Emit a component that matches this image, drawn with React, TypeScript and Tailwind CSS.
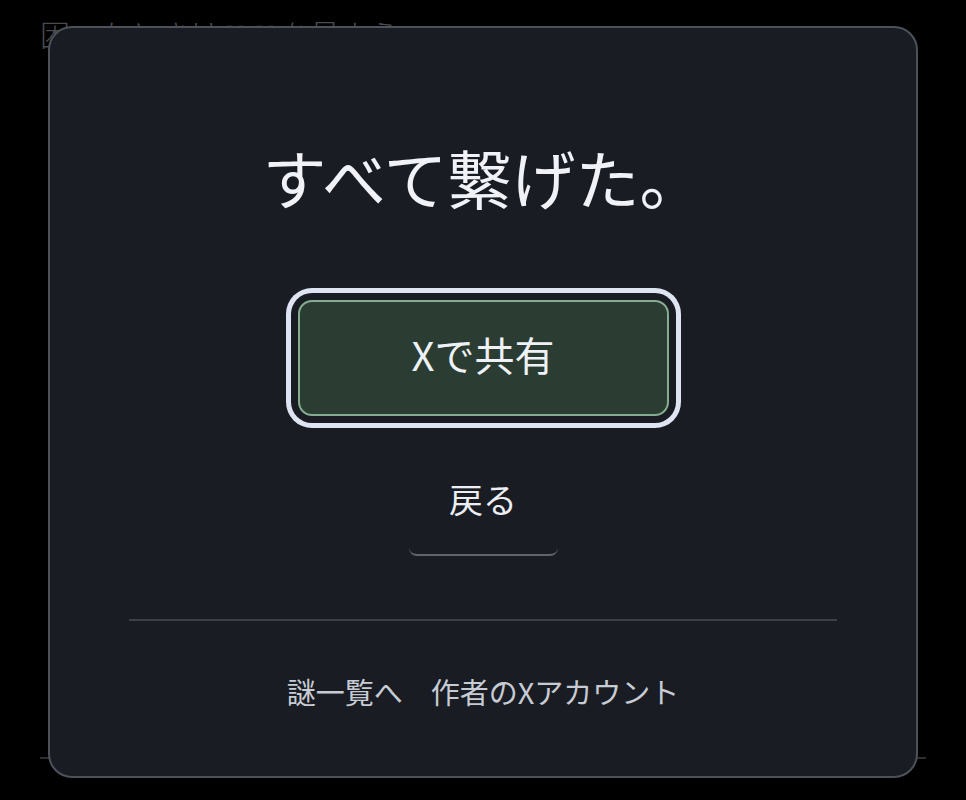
import React from "react";

const font = { fontFamily: '"Noto Sans CJK JP", "Noto Sans", sans-serif' };

export default function App() {
  return (
    <div className="relative h-[800px] w-[966px] overflow-hidden bg-black" style={font}>
      {/* page behind the dialog */}
      <div className="flex h-full flex-col px-[40px] pt-[14px]">
        <p className="text-[30px] font-light leading-[38px] text-[#4a4c50]">困ったときはここを見よう</p>
        <div className="mt-auto mb-[41px] h-[2px] w-[886px] bg-[#2c2e32]" />
      </div>

      {/* result dialog */}
      <div className="absolute left-[48px] top-[26px] flex h-[752px] w-[870px] flex-col items-center rounded-[24px] border-2 border-[#4d525a] bg-[#191c23]">
        <h2 className="mt-[116px] text-[64px] font-normal leading-[64px] text-[#f0f2f8]">
          すべて繋げた。
        </h2>

        <button className="mt-[92px] flex h-[116px] w-[371px] items-center justify-center rounded-[14px] border-2 border-[#86ad91] bg-[#2b3d33] pb-[8px] text-[40px] leading-none text-[#eef1f6] ring-[5px] ring-[#dfe4f2] ring-offset-[7px] ring-offset-[#191c23]">
          Xで共有
        </button>

        <button className="mt-[36px] flex h-[104px] w-[149px] items-center justify-center rounded-[8px] border-b-2 border-[#5f646c] pb-[8px] text-[34px] leading-none text-[#eceef3]">
          戻る
        </button>

        <div className="mt-[63px] h-[2px] w-[708px] bg-[#3c4149]" />

        <nav className="mt-[56px] flex items-center gap-[28px] text-[29px] leading-[28px] text-[#c7cbd3]">
          <a>謎一覧へ</a>
          <a>作者のXアカウント</a>
        </nav>
      </div>
    </div>
  );
}
